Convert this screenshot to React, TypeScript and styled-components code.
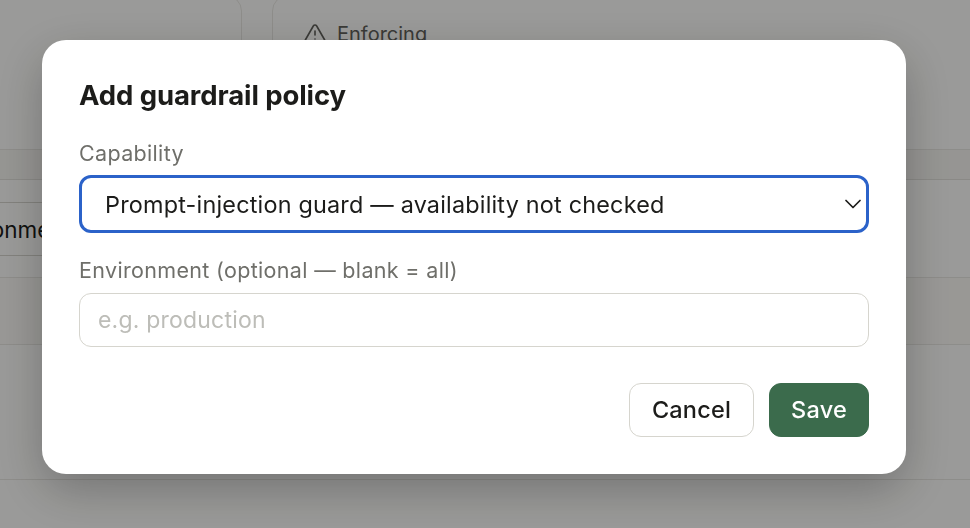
import React from "react"
import styled, { createGlobalStyle } from "styled-components"
import { ChevronDown } from "lucide-react"

const fontStack = `Inter, "Noto Sans", "Liberation Sans", sans-serif`

const Global = createGlobalStyle`
    html, body {
        margin: 0;
        padding: 0;
        height: 100%;
        overflow: hidden;
        background: #fbfbf9;
        font-family: ${fontStack};
    }
`

const Pagina = styled.div`
    width: 970px;
    height: 528px;
    overflow: hidden;
    background: #fbfbf9;
    color: #1c1c1a;
`
const LinhaCards = styled.div`
    display: grid;
    grid-template-columns: 242px 1fr;
    gap: 30px;
    height: 155px;
    margin-top: -5px;
`
const Card = styled.div<{ $lado: "esq" | "dir" }>`
    box-sizing: border-box;
    border: 1px solid #e6e5e0;
    border-radius: 16px;
    margin-left: ${props => props.$lado === "esq" ? "-40px" : "0"};
    margin-right: ${props => props.$lado === "dir" ? "-40px" : "0"};
    padding: 24px 30px;
`
const Status = styled.div`
    display: flex;
    align-items: center;
    gap: 10px;
    font-size: 20px;
    line-height: 28px;
    color: #5f5f59;
`
const Faixa = styled.div`
    height: 30px;
    background: #f4f3ef;
    border-bottom: 1px solid #e0dfda;
    box-sizing: border-box;
`
const Filtros = styled.div`
    height: 98px;
    padding-top: 22px;
    box-sizing: border-box;
    border-bottom: 1px solid #e6e5e0;
`
const Filtro = styled.div`
    width: 220px;
    height: 54px;
    margin-left: -78px;
    padding-left: 15px;
    box-sizing: border-box;
    display: flex;
    align-items: center;
    border: 1px solid #d4d3cc;
    border-radius: 10px;
    font-size: 22.5px;
`
const Linha = styled.div<{ $altura: number; $fundo: string }>`
    height: ${props => props.$altura}px;
    background: ${props => props.$fundo};
    border-bottom: 1px solid #e6e5e0;
    box-sizing: border-box;
`

const Fundo = styled.div`
    position: fixed;
    inset: 0;
    padding: 40px 64px 54px 42px;
    box-sizing: border-box;
    display: flex;
    background: rgba(0, 0, 0, 0.385);
`
const Janela = styled.form`
    flex: 1;
    box-sizing: border-box;
    padding: 37px;
    background: #ffffff;
    border-radius: 24px;
    box-shadow: 0 16px 48px rgba(0, 0, 0, 0.26);
    display: flex;
    flex-direction: column;
`
const Titulo = styled.h2`
    margin: 0;
    font-size: 27.5px;
    line-height: 36px;
    font-weight: 700;
    letter-spacing: -0.1px;
    color: #1c1c1a;
`
const Rotulo = styled.label`
    display: block;
    margin-top: 25px;
    font-size: 21.5px;
    line-height: 30px;
    letter-spacing: 0.33px;
    color: #6f6f6a;
`
const CampoWrapper = styled.div`
    position: relative;
    margin-top: 7px;
    margin-bottom: -3px;
`
const Campo = styled.select`
    display: block;
    appearance: none;
    width: 100%;
    height: 58px;
    padding: 0 0 0 23px;
    box-sizing: border-box;
    background: #ffffff;
    border: 3px solid #2b62c9;
    border-radius: 12px;
    outline: none;
    font-family: ${fontStack};
    font-size: 23.4px;
    letter-spacing: 0.2px;
    color: #1c1c1a;
`
const Seta = styled(ChevronDown)`
    position: absolute;
    top: 15px;
    right: 2px;
    width: 28px;
    height: 28px;
    stroke-width: 1.5;
    color: #1c1c1a;
    pointer-events: none;
`
const Entrada = styled.input`
    display: block;
    width: 100%;
    height: 54px;
    margin-top: 8px;
    padding: 0 18px;
    box-sizing: border-box;
    background: #ffffff;
    border: 1px solid #d6d5ce;
    border-radius: 12px;
    outline: none;
    font-family: ${fontStack};
    font-size: 23px;
    letter-spacing: 0.2px;
    color: #1c1c1a;
    &::placeholder {
        color: #bdbdb8;
        opacity: 1;
    }
`
const Acoes = styled.div`
    display: flex;
    justify-content: flex-end;
    gap: 15px;
    margin-top: 36px;
`
const Botao = styled.button<{ $primario?: boolean }>`
    height: 54px;
    width: ${props => props.$primario ? "100px" : "125px"};
    padding: 0 0 2px;
    box-sizing: border-box;
    border-radius: 12px;
    border: 1px solid ${props => props.$primario ? "#3b6b4c" : "#d6d5ce"};
    background: ${props => props.$primario ? "#3b6b4c" : "#ffffff"};
    color: ${props => props.$primario ? "#ffffff" : "#1c1c1a"};
    font-family: ${fontStack};
    font-size: 23.5px;
    letter-spacing: 0.2px;
    font-weight: 500;
`

const Alerta = () => (
    <svg width="24" height="24" viewBox="0 0 24 24" fill="none" stroke="currentColor" strokeWidth="1.6" strokeLinecap="round" strokeLinejoin="round">
        <path d="m21.7 18-8-14a2 2 0 0 0-3.4 0l-8 14A2 2 0 0 0 4 21h16a2 2 0 0 0 1.7-3" />
        <path d="M12 9v4" />
        <path d="M12 17h.01" />
    </svg>
)

export default function App() {
    return (
        <>
            <Global />
            <Pagina>
                <LinhaCards>
                    <Card $lado="esq" />
                    <Card $lado="dir">
                        <Status><Alerta />Enforcing</Status>
                    </Card>
                </LinhaCards>
                <Faixa />
                <Filtros>
                    <Filtro>Environment</Filtro>
                </Filtros>
                <Linha $altura={67} $fundo="#f8f7f3" />
                <Linha $altura={135} $fundo="#fbfbf9" />
            </Pagina>
            <Fundo>
                <Janela onSubmit={e => e.preventDefault()}>
                    <Titulo>Add guardrail policy</Titulo>
                    <Rotulo htmlFor="capacidade">Capability</Rotulo>
                    <CampoWrapper>
                        <Campo id="capacidade" defaultValue="prompt">
                            <option value="prompt">Prompt-injection guard — availability not checked</option>
                        </Campo>
                        <Seta />
                    </CampoWrapper>
                    <Rotulo htmlFor="ambiente">Environment (optional — blank = all)</Rotulo>
                    <Entrada id="ambiente" placeholder="e.g. production" />
                    <Acoes>
                        <Botao type="button">Cancel</Botao>
                        <Botao type="submit" $primario>Save</Botao>
                    </Acoes>
                </Janela>
            </Fundo>
        </>
    )
}
